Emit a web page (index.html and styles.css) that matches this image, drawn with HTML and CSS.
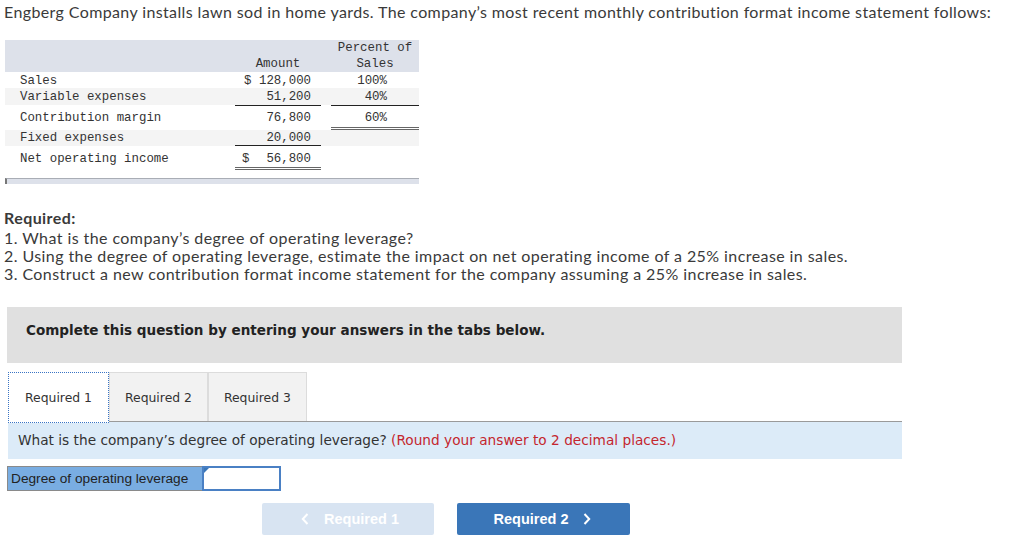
FILE: index.html
```html
<!DOCTYPE html>
<html lang="en">
<head>
    <meta charset="UTF-8">
    <title>Operating Leverage</title>
    <link rel="stylesheet" href="styles.css">
</head>
<body>
    <p class="intro">Engberg Company installs lawn sod in home yards. The company’s most recent monthly contribution format income statement follows:</p>

    <div class="statement">
        <div class="row head">
            <div class="label"></div>
            <div class="amount center">Amount</div>
            <div class="gap"></div>
            <div class="pct center">Percent of<br>Sales</div>
        </div>
        <div class="row r-sales">
            <div class="label">Sales</div>
            <div class="amount">$ 128,000</div>
            <div class="gap"></div>
            <div class="pct">100%</div>
        </div>
        <div class="row r-var shade">
            <div class="label">Variable expenses</div>
            <div class="amount line">51,200</div>
            <div class="gap"></div>
            <div class="pct line">40%</div>
        </div>
        <div class="row r-cm">
            <div class="label">Contribution margin</div>
            <div class="amount">76,800</div>
            <div class="gap"></div>
            <div class="pct dbl">60%</div>
        </div>
        <div class="row r-fixed shade">
            <div class="label">Fixed expenses</div>
            <div class="amount line">20,000</div>
            <div class="gap"></div>
            <div class="pct"></div>
        </div>
        <div class="row r-net">
            <div class="label">Net operating income</div>
            <div class="amount dbl"><span class="dollar">$</span>56,800</div>
            <div class="gap"></div>
            <div class="pct"></div>
        </div>
        <div class="statement-foot"></div>
    </div>

    <div class="required">
        <strong>Required:</strong>
        <p>1. What is the company’s degree of operating leverage?</p>
        <p>2. Using the degree of operating leverage, estimate the impact on net operating income of a 25% increase in sales.</p>
        <p>3. Construct a new contribution format income statement for the company assuming a 25% increase in sales.</p>
    </div>

    <div class="work">
        <div class="instructions">Complete this question by entering your answers in the tabs below.</div>

        <div class="tabs">
            <div class="tab active">Required 1</div>
            <div class="tab">Required 2</div>
            <div class="tab">Required 3</div>
        </div>

        <div class="prompt">What is the company’s degree of operating leverage? <span class="hint">(Round your answer to 2 decimal places.)</span></div>

        <div class="answer-row">
            <div class="answer-label">Degree of operating leverage</div>
            <div class="answer-input"><span class="corner"></span></div>
        </div>

        <div class="nav">
            <button class="nav-btn prev">
                <svg class="chev" width="8" height="12" viewBox="0 0 8 12"><path d="M6.5 1 L1.8 6 L6.5 11" fill="none" stroke="currentColor" stroke-width="2"/></svg>
                Required 1
            </button>
            <button class="nav-btn next">
                Required 2
                <svg class="chev" width="8" height="12" viewBox="0 0 8 12"><path d="M1.5 1 L6.2 6 L1.5 11" fill="none" stroke="currentColor" stroke-width="2"/></svg>
            </button>
        </div>
    </div>
</body>
</html>
```

FILE: styles.css
```css
body {
    margin: 0;
    padding: 0 4px;
    font-family: Lato, "Open Sans", sans-serif;
    color: #3a3a3a;
    background: #fff;
}

.intro {
    margin: 3px 0 0;
    font-size: 16px;
    letter-spacing: 0.38px;
    line-height: 18px;
}

/* income statement */
.statement {
    margin: 19px 0 0 1px;
    width: 414px;
    font-family: "Liberation Mono", monospace;
    font-size: 12.4px;
    line-height: 16px;
    color: #333;
}

.row {
    display: grid;
    grid-template-columns: 230px 86px 10px 88px;
}

.row > div {
    box-sizing: border-box;
    white-space: nowrap;
}

.head {
    height: 32px;
    align-items: end;
    background: #dde1ea;
}

.label {
    padding-left: 15px;
}

.amount {
    padding-right: 10px;
    text-align: right;
}

.pct {
    padding-right: 32px;
    text-align: right;
}

.row .center {
    text-align: center;
    padding-right: 0;
}

.shade {
    background: #f4f4f4;
}

.r-sales {
    height: 16px;
}

.r-sales > div {
    padding-top: 1px;
}

.r-var {
    height: 17px;
}

.r-var > div {
    padding-top: 1px;
}

.r-cm {
    height: 25px;
}

.r-cm > div {
    padding-top: 5px;
}

.r-fixed {
    height: 16px;
    line-height: 12px;
}

.r-fixed > div {
    padding-top: 2px;
}

.r-net {
    height: 24px;
}

.r-net > div {
    padding-top: 5px;
}

.row .line {
    border-bottom: 1px solid #222;
}

.row .dbl {
    border-bottom: 3px double #666;
}

.dollar {
    float: left;
    padding-left: 7px;
}

.statement-foot {
    margin-top: 8px;
    height: 5px;
    background: #dde1ea;
    border-top: 1px solid #a9adb5;
    border-left: 2px solid #777;
}

.required {
    margin-top: 25px;
    font-size: 16px;
    letter-spacing: 0.42px;
    line-height: 18px;
}

.required strong {
    display: block;
    margin-bottom: 2px;
}

.required p {
    margin: 0;
}

/* answer area */
.work {
    margin-top: 24px;
    margin-left: 3px;
    width: 895px;
}

.instructions {
    height: 56px;
    box-sizing: border-box;
    padding: 14px 0 0 19px;
    background: #e0e0e0;
    font-family: "DejaVu Sans", Verdana, sans-serif;
    font-weight: bold;
    font-size: 13.55px;
    line-height: 18px;
    color: #222;
}

.tabs {
    display: flex;
    margin-top: 9px;
    margin-left: 1px;
    border-bottom: 1px solid #9a9a9a;
}

.tab {
    height: 48px;
    padding: 0 15px;
    display: flex;
    align-items: center;
    font-family: "DejaVu Sans", Tahoma, sans-serif;
    font-size: 12.4px;
    color: #333;
    background: #f2f2f2;
    border: 1px solid #dcdcdc;
    border-bottom: none;
}

.tab.active {
    background: #fff;
    border: 1px dotted #3a74c4;
    margin-bottom: -2px;
    height: 49px;
    padding: 0 16px;
}

.prompt {
    margin-left: 1px;
    height: 37px;
    box-sizing: border-box;
    padding: 10px 0 0 10px;
    background: #dcebf8;
    font-family: "DejaVu Sans", Tahoma, sans-serif;
    font-size: 13.7px;
    line-height: 17px;
    color: #333;
}

.hint {
    color: #c4262e;
}

.answer-row {
    display: flex;
    margin-top: 7px;
}

.answer-label {
    width: 195px;
    height: 25px;
    box-sizing: border-box;
    padding-left: 3px;
    background: #79ade2;
    border: 1px solid #8a8a8a;
    border-right: none;
    font-family: "Liberation Sans", Arial, sans-serif;
    font-size: 13.7px;
    line-height: 23px;
    color: #222;
}

.answer-input {
    position: relative;
    width: 79px;
    height: 25px;
    box-sizing: border-box;
    background: #fff;
    border: 2px solid #4a80c4;
}

.corner {
    position: absolute;
    top: 0;
    left: 0;
    border-left: 5px solid #3a76b8;
    border-bottom: 5px solid transparent;
}

.nav {
    display: flex;
    gap: 23px;
    margin-top: 12px;
    padding-left: 255px;
}

.nav-btn {
    width: 172px;
    height: 32px;
    display: flex;
    align-items: center;
    justify-content: center;
    gap: 15px;
    border: none;
    border-radius: 2px;
    font-family: "Liberation Sans", Arial, sans-serif;
    font-weight: bold;
    font-size: 14.5px;
    color: #fff;
}

.nav-btn.prev {
    background: #d8e4f2;
    padding-right: 2px;
}

.nav-btn.next {
    width: 173px;
    background: #3a76b8;
    padding-left: 4px;
}
```
